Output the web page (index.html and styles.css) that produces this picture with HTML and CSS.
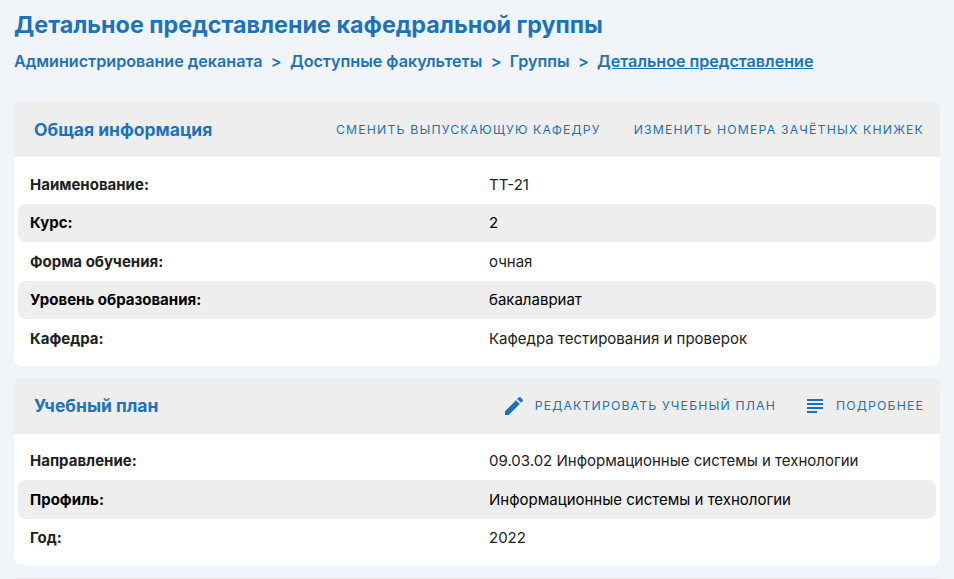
FILE: index.html
```html
<!DOCTYPE html>
<html lang="ru">
<head>
<meta charset="utf-8">
<title>Детальное представление</title>
<link rel="stylesheet" href="styles.css">
</head>
<body>
<h1 class="title">Детальное представление кафедральной группы</h1>
<nav class="crumbs">
<a>Администрирование деканата</a><span class="sep">&gt;</span><a>Доступные факультеты</a><span class="sep">&gt;</span><a>Группы</a><span class="sep">&gt;</span><a class="current">Детальное представление</a>
</nav>
<section class="card first">
<header class="head">
<h2>Общая информация</h2>
<div class="actions">
<button class="btn">Сменить выпускающую кафедру</button>
<button class="btn">Изменить номера зачётных книжек</button>
</div>
</header>
<div class="rows">
<div class="row"><b>Наименование:</b><span>ТТ-21</span></div>
<div class="row alt"><b>Курс:</b><span>2</span></div>
<div class="row"><b>Форма обучения:</b><span>очная</span></div>
<div class="row alt"><b>Уровень образования:</b><span>бакалавриат</span></div>
<div class="row"><b>Кафедра:</b><span>Кафедра тестирования и проверок</span></div>
</div>
</section>
<section class="card">
<header class="head">
<h2>Учебный план</h2>
<div class="actions tight">
<button class="btn"><svg class="ico" viewBox="0 0 24 24"><path d="M3 17.25V21h3.75L17.81 9.94l-3.75-3.75L3 17.25zM20.71 7.04a1 1 0 0 0 0-1.41l-2.34-2.34a1 1 0 0 0-1.41 0l-1.83 1.83 3.75 3.75 1.83-1.83z"/></svg>Редактировать учебный план</button>
<button class="btn"><svg class="ico" viewBox="0 0 24 24"><path d="M14 17H4v2h10v-2zm6-8H4v2h16V9zM4 15h16v-2H4v2zM4 5v2h16V5H4z"/></svg>Подробнее</button>
</div>
</header>
<div class="rows">
<div class="row"><b>Направление:</b><span>09.03.02 Информационные системы и технологии</span></div>
<div class="row alt"><b>Профиль:</b><span>Информационные системы и технологии</span></div>
<div class="row"><b>Год:</b><span>2022</span></div>
</div>
</section>
<div class="card sliver"></div>
</body>
</html>
```
FILE: styles.css
```css
* { box-sizing: border-box; }
html, body { height: 100%; }
html { overflow: hidden; }
body { margin: 0; padding: 9px 14px 0; background: #f1f5f9; font-family: Inter, sans-serif; color: #212121; overflow: hidden; }
.title { margin: 0; font-size: 23.32px; line-height: 32px; font-weight: 700; color: #1d72b8; }
.crumbs { display: flex; align-items: center; margin-top: 9px; height: 21px; font-size: 16.13px; font-weight: 600; color: #1d72b8; }
.sep { margin: 0 8.3px; }
.current { text-decoration: underline; }
.card { background: #fff; border-radius: 8px; margin-bottom: 12px; overflow: hidden; }
.card.first { margin-top: 30px; }
.card.sliver { height: 2px; margin-bottom: 0; background: #eeeeee; border-radius: 8px 8px 0 0; }
.head { display: flex; align-items: center; justify-content: space-between; height: 56px; padding: 0 16px 0 20px; background: #eeeeee; }
.head h2 { margin: 0; font-size: 17.5px; font-weight: 700; color: #1d72b8; }
.actions { display: flex; gap: 33px; }
.actions.tight { gap: 27px; }
.btn { display: flex; align-items: center; gap: 9px; border: 0; padding: 0; background: none; font: 400 12.25px Inter, sans-serif; letter-spacing: 1.17px; text-transform: uppercase; color: #1d72b8; }
.ico { width: 24px; height: 24px; fill: #1d72b8; }
.rows { padding: 8px 4px; display: flex; flex-direction: column; }
.row { display: grid; grid-template-columns: 459px 1fr; align-items: center; height: 38.5px; padding: 0 12px; font-size: 15px; border-radius: 8px; }
.row b { font-weight: 700; }
.alt { background: #eeeeee; color: #000; }
```
